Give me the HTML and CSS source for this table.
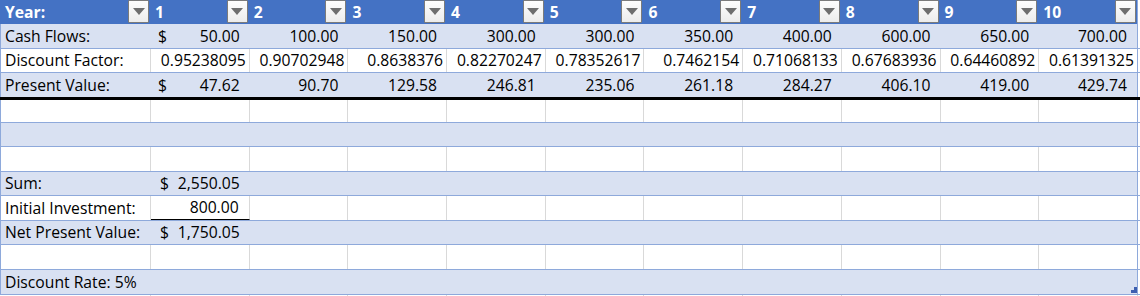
FILE: index.html
```html
<!DOCTYPE html>
<html lang="en">
<head>
<meta charset="utf-8">
<title>NPV Table</title>
<link rel="stylesheet" href="styles.css">
</head>
<body>
<div class="sheet">
  <div class="row head">
    <div class="c hc"><span class="ht">Year:</span><span class="dd"><svg viewBox="0 0 12 7" width="12" height="7"><polygon points="0,0 12,0 6,7" fill="#6e6e6e"/></svg></span></div>
    <div class="c hc"><span class="ht">1</span><span class="dd"><svg viewBox="0 0 12 7" width="12" height="7"><polygon points="0,0 12,0 6,7" fill="#6e6e6e"/></svg></span></div>
    <div class="c hc"><span class="ht">2</span><span class="dd"><svg viewBox="0 0 12 7" width="12" height="7"><polygon points="0,0 12,0 6,7" fill="#6e6e6e"/></svg></span></div>
    <div class="c hc"><span class="ht">3</span><span class="dd"><svg viewBox="0 0 12 7" width="12" height="7"><polygon points="0,0 12,0 6,7" fill="#6e6e6e"/></svg></span></div>
    <div class="c hc"><span class="ht">4</span><span class="dd"><svg viewBox="0 0 12 7" width="12" height="7"><polygon points="0,0 12,0 6,7" fill="#6e6e6e"/></svg></span></div>
    <div class="c hc"><span class="ht">5</span><span class="dd"><svg viewBox="0 0 12 7" width="12" height="7"><polygon points="0,0 12,0 6,7" fill="#6e6e6e"/></svg></span></div>
    <div class="c hc"><span class="ht">6</span><span class="dd"><svg viewBox="0 0 12 7" width="12" height="7"><polygon points="0,0 12,0 6,7" fill="#6e6e6e"/></svg></span></div>
    <div class="c hc"><span class="ht">7</span><span class="dd"><svg viewBox="0 0 12 7" width="12" height="7"><polygon points="0,0 12,0 6,7" fill="#6e6e6e"/></svg></span></div>
    <div class="c hc"><span class="ht">8</span><span class="dd"><svg viewBox="0 0 12 7" width="12" height="7"><polygon points="0,0 12,0 6,7" fill="#6e6e6e"/></svg></span></div>
    <div class="c hc"><span class="ht">9</span><span class="dd"><svg viewBox="0 0 12 7" width="12" height="7"><polygon points="0,0 12,0 6,7" fill="#6e6e6e"/></svg></span></div>
    <div class="c hc last"><span class="ht">10</span><span class="dd"><svg viewBox="0 0 12 7" width="12" height="7"><polygon points="0,0 12,0 6,7" fill="#6e6e6e"/></svg></span></div>
  </div>

  <div class="row band">
    <div class="c">Cash Flows:</div>
    <div class="c acc"><span>$</span><span>50.00</span></div>
    <div class="c num">100.00</div>
    <div class="c num">150.00</div>
    <div class="c num">300.00</div>
    <div class="c num">300.00</div>
    <div class="c num">350.00</div>
    <div class="c num">400.00</div>
    <div class="c num">600.00</div>
    <div class="c num">650.00</div>
    <div class="c num last">700.00</div>
  </div>

  <div class="row white">
    <div class="c">Discount Factor:</div>
    <div class="c dec">0.95238095</div>
    <div class="c dec">0.90702948</div>
    <div class="c dec">0.8638376</div>
    <div class="c dec">0.82270247</div>
    <div class="c dec">0.78352617</div>
    <div class="c dec">0.7462154</div>
    <div class="c dec">0.71068133</div>
    <div class="c dec">0.67683936</div>
    <div class="c dec">0.64460892</div>
    <div class="c dec last">0.61391325</div>
  </div>

  <div class="row band total">
    <div class="c">Present Value:</div>
    <div class="c acc"><span>$</span><span>47.62</span></div>
    <div class="c num">90.70</div>
    <div class="c num">129.58</div>
    <div class="c num">246.81</div>
    <div class="c num">235.06</div>
    <div class="c num">261.18</div>
    <div class="c num">284.27</div>
    <div class="c num">406.10</div>
    <div class="c num">419.00</div>
    <div class="c num last">429.74</div>
  </div>

  <div class="row white after">
    <div class="c"></div><div class="c"></div><div class="c"></div><div class="c"></div><div class="c"></div><div class="c"></div><div class="c"></div><div class="c"></div><div class="c"></div><div class="c"></div><div class="c last"></div>
  </div>

  <div class="row band">
    <div class="c"></div><div class="c"></div><div class="c"></div><div class="c"></div><div class="c"></div><div class="c"></div><div class="c"></div><div class="c"></div><div class="c"></div><div class="c"></div><div class="c last"></div>
  </div>

  <div class="row white">
    <div class="c"></div><div class="c"></div><div class="c"></div><div class="c"></div><div class="c"></div><div class="c"></div><div class="c"></div><div class="c"></div><div class="c"></div><div class="c"></div><div class="c last"></div>
  </div>

  <div class="row band">
    <div class="c">Sum:</div>
    <div class="c acc sumv"><span>$</span><span>2,550.05</span></div>
    <div class="c"></div><div class="c"></div><div class="c"></div><div class="c"></div><div class="c"></div><div class="c"></div><div class="c"></div><div class="c"></div><div class="c last"></div>
  </div>

  <div class="row white">
    <div class="c">Initial Investment:</div>
    <div class="c num under">800.00</div>
    <div class="c"></div><div class="c"></div><div class="c"></div><div class="c"></div><div class="c"></div><div class="c"></div><div class="c"></div><div class="c"></div><div class="c last"></div>
  </div>

  <div class="row band">
    <div class="c">Net Present Value:</div>
    <div class="c acc sumv"><span>$</span><span>1,750.05</span></div>
    <div class="c"></div><div class="c"></div><div class="c"></div><div class="c"></div><div class="c"></div><div class="c"></div><div class="c"></div><div class="c"></div><div class="c last"></div>
  </div>

  <div class="row white">
    <div class="c"></div><div class="c"></div><div class="c"></div><div class="c"></div><div class="c"></div><div class="c"></div><div class="c"></div><div class="c"></div><div class="c"></div><div class="c"></div><div class="c last"></div>
  </div>

  <div class="row band lastrow">
    <div class="c">Discount Rate: 5%</div>
    <div class="c"></div><div class="c"></div><div class="c"></div><div class="c"></div><div class="c"></div><div class="c"></div><div class="c"></div><div class="c"></div><div class="c"></div><div class="c last"></div>
    <span class="handle"><svg viewBox="0 0 6 6" width="6" height="6"><polygon points="3,0 6,0 6,6 0,6 0,3 3,3" fill="#3d5fb0"/></svg></span>
  </div>

  <div class="row outside">
    <div class="c"></div><div class="c"></div><div class="c"></div><div class="c"></div><div class="c"></div><div class="c"></div><div class="c"></div><div class="c"></div><div class="c"></div><div class="c"></div><div class="c"></div>
  </div>
</div>
</body>
</html>
```

FILE: styles.css
```css
html, body {
  margin: 0;
  padding: 0;
  background: #ffffff;
}

body {
  font-family: "Open Sans", "Noto Sans", sans-serif;
  font-size: 15.7px;
  color: #000000;
  overflow: hidden;
}

.sheet {
  width: 1140px;
}

.row {
  display: grid;
  grid-template-columns: 151px repeat(10, 98.7px) 2px;
  height: 24.5px;
  box-sizing: border-box;
  border-bottom: 1px solid #8ea9db;
  position: relative;
}

.row::after {
  content: "";
}

.c {
  display: flex;
  align-items: flex-end;
  box-sizing: border-box;
  padding: 0 4px 1px 4px;
  white-space: nowrap;
  overflow: visible;
  line-height: 21px;
  min-width: 0;
}

.row .c:first-child {
  border-left: 1px solid #8ea9db;
  padding-left: 4px;
}

.row .c.last {
  border-right: 1px solid #8ea9db;
}

/* header */
.head {
  height: 24px;
  background: #4472c4;
  border-bottom: none;
}

.head::after {
  background: #ffffff;
}

.hc {
  justify-content: space-between;
  align-items: stretch;
  padding: 0 2px 0 4px;
}

.head .hc:first-child {
  border-left: 1px solid #4472c4;
}

.head .hc.last {
  border-right: 1px solid #8ea9db;
  padding-right: 1px;
}

.ht {
  color: #ffffff;
  font-weight: 700;
  align-self: flex-end;
  padding-bottom: 1px;
}

.dd {
  width: 21px;
  height: 23px;
  box-sizing: border-box;
  border: 1px solid #7b7b7b;
  border-radius: 1px;
  background: linear-gradient(#fdfdfd, #ececec);
  display: flex;
  align-items: center;
  justify-content: center;
}

.dd svg {
  display: block;
}

/* bands */
.band {
  background: #d9e1f2;
}

.band::after,
.white::after,
.outside::after {
  background: #ffffff;
}

.white .c {
  border-right: 1px solid #d9d9d9;
}

.outside {
  height: 2px;
  border-bottom: none;
}

.outside .c {
  border-right: 1px solid #d9d9d9;
  padding: 0;
}

.outside .c:first-child {
  border-left: none;
}

/* number formats */
.num {
  justify-content: flex-end;
  padding-right: 10px;
}

.dec {
  justify-content: flex-end;
  padding-right: 3px;
}

.acc {
  justify-content: space-between;
  padding-left: 7px;
  padding-right: 10px;
}

.sumv {
  padding-left: 9px;
}

.under {
  border-bottom: 1px solid #000000;
}

.total {
  height: 27px;
  border-bottom: 3px solid #000000;
}

.total .c {
  padding-bottom: 1px;
}

.after {
  height: 22.5px;
}

.lastrow {
  height: 25px;
}

.handle {
  position: absolute;
  right: 3px;
  bottom: 1px;
  width: 6px;
  height: 6px;
}

.handle svg {
  display: block;
}
```
